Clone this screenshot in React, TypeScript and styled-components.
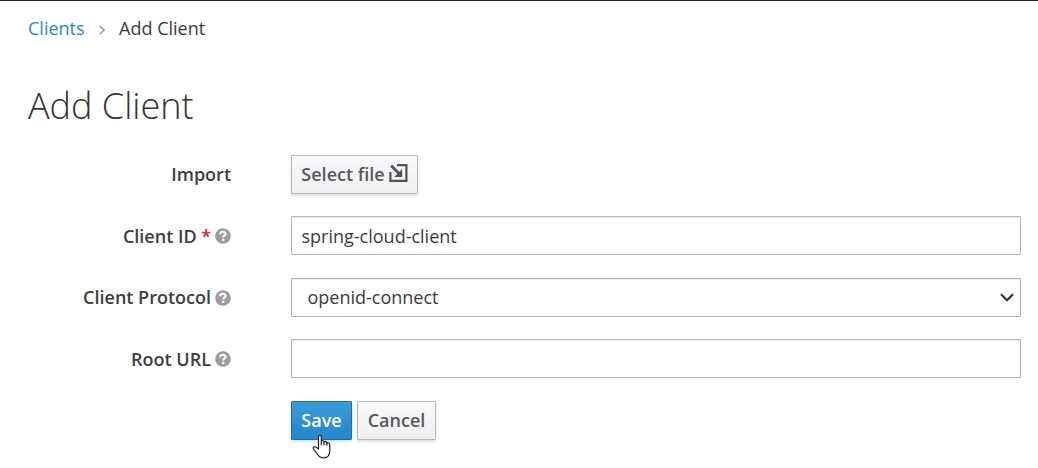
import React from 'react';
import styled, { createGlobalStyle } from 'styled-components';

const GlobalStyle = createGlobalStyle`
  *, *::before, *::after { box-sizing: border-box; }
  body {
    margin: 0;
    background: #fff;
    color: #3c3c40;
    font-family: 'Open Sans', sans-serif;
    font-size: 18px;
    line-height: 30px;
  }
`;

const Page = styled.main`
  height: 468px;
  overflow: hidden;
  border-top: 1px solid #231f20;
  padding: 12px 17px 0 28px;
`;

const Breadcrumb = styled.nav`
  display: flex;
  align-items: center;
  height: 30px;
`;

const Crumb = styled.span<{ $link?: boolean }>`
  color: ${(p) => (p.$link ? '#2b8ac6' : '#3c3c40')};
`;

const Separator = styled.svg`
  width: 6px;
  height: 10px;
  margin: 3px 14px 0 14.5px;
`;

const Title = styled.h1`
  margin: 37.8px 0 0;
  height: 74px;
  line-height: 50px;
  font-size: 36px;
  font-weight: 300;
  color: #333;
`;

const Form = styled.form`
  display: flex;
  flex-direction: column;
  gap: 22.5px;
`;

const Row = styled.div`
  display: grid;
  grid-template-columns: 203px 1fr;
  column-gap: 60px;
  align-items: center;
  height: 39px;
`;

const Label = styled.label`
  display: flex;
  align-items: center;
  justify-content: flex-end;
  font-weight: 600;
  color: #3e3e42;
  white-space: nowrap;
`;

const Required = styled.span`
  margin-left: 4.5px;
  color: #e0232b;
`;

const HelpIcon = styled.svg`
  width: 16px;
  height: 16px;
  margin: 1px 0 0 4px;
`;

const Field = styled.div<{ $inset?: number }>`
  display: flex;
  align-items: center;
  justify-content: space-between;
  height: 39px;
  padding: 0 6px 0 ${(p) => p.$inset ?? 9.5}px;
  border: 1px solid #b5b5b5;
  border-radius: 1px;
  box-shadow: inset 0 1px 1px rgba(3, 3, 3, 0.075);
`;

const Chevron = styled.svg`
  width: 14px;
  height: 9px;
`;

const Actions = styled.div`
  display: flex;
  gap: 5px;
`;

const Button = styled.button<{ $primary?: boolean; $width: number }>`
  position: relative;
  display: flex;
  align-items: center;
  justify-content: center;
  gap: 4px;
  width: ${(p) => p.$width}px;
  height: 39px;
  padding: 0;
  border: 1px solid ${(p) => (p.$primary ? '#1c6ea6' : '#b7b7b7')};
  border-radius: 1px;
  background: ${(p) =>
    p.$primary ? 'linear-gradient(#3a9bdb, #2487cc)' : 'linear-gradient(#fafafa, #efefef)'};
  box-shadow: 0 2px 3px rgba(3, 3, 3, 0.12);
  color: ${(p) => (p.$primary ? '#fff' : '#55595f')};
  font: 600 18px/30px 'Open Sans', sans-serif;
  white-space: nowrap;
`;

const ImportGlyph = styled.svg`
  width: 19px;
  height: 18px;
  margin-top: -2px;
`;

const Pointer = styled.svg`
  position: absolute;
  left: 20px;
  top: 32.5px;
  width: 19px;
  height: 25px;
`;

const Help = () => (
  <HelpIcon viewBox="0 0 16 16">
    <circle cx="8" cy="8" r="7.8" fill="#9d9d9d" />
    <path d="M5.2 6.2C5.2 3 10.6 3.1 10.6 5.9C10.6 7.7 8.2 7.6 8.2 9.5" fill="none" stroke="#fff" strokeWidth="2.1" />
    <rect x="7.1" y="10.7" width="2.2" height="2.2" fill="#fff" />
  </HelpIcon>
);

export default function App() {
  return (
    <Page>
      <GlobalStyle />
      <Breadcrumb>
        <Crumb $link>Clients</Crumb>
        <Separator viewBox="0 0 6 10" fill="none" stroke="#9c9c9c" strokeWidth="1.6">
          <path d="M.8 .8 5 5 .8 9.2" />
        </Separator>
        <Crumb>Add Client</Crumb>
      </Breadcrumb>
      <Title>Add Client</Title>
      <Form>
        <Row>
          <Label>Import</Label>
          <Button type="button" $width={127}>
            Select file
            <ImportGlyph viewBox="0 0 19 18" fill="none" stroke="#4d5258" strokeWidth="2.2">
              <path d="M8 1.2H17.4V16.8H1.4V8" />
              <path d="M2.2 1.8 11 10.6" strokeWidth="2.8" />
              <path d="M13.2 5V13H5.2Z" fill="#4d5258" stroke="none" />
            </ImportGlyph>
          </Button>
        </Row>
        <Row>
          <Label>
            Client ID<Required>*</Required>
            <Help />
          </Label>
          <Field>spring-cloud-client</Field>
        </Row>
        <Row>
          <Label>
            Client Protocol
            <Help />
          </Label>
          <Field $inset={15.5}>
            openid-connect
            <Chevron viewBox="0 0 14 9" fill="none" stroke="#333" strokeWidth="2.2">
              <path d="M1 1.2 7 7.2 13 1.2" />
            </Chevron>
          </Field>
        </Row>
        <Row>
          <Label>
            Root URL
            <Help />
          </Label>
          <Field />
        </Row>
        <Row>
          <span />
          <Actions>
            <Button type="button" $primary $width={61}>
              Save
              <Pointer viewBox="0 0 19 25" fill="#fff" stroke="#222" strokeWidth="1.2" strokeLinejoin="round">
                <path d="M6.5 15V3C6.5 .8 9.3 .8 9.3 3V7.5C9.3 5.9 12 6.2 12 8V8.6C12 6.8 14.8 7.2 14.8 9V9.6C15 8.2 17.8 8.4 17.8 10.5V16.5C17.8 21 15.7 23.8 11.7 23.8C7.8 23.8 6.5 22 4.5 18.8L1.5 15.2C.3 13.3 2.7 12 4 13.2Z" />
                <path d="M9.3 7.5V11.3M12 8.2V11.3M14.8 9.2V11.8" />
              </Pointer>
            </Button>
            <Button type="button" $width={79}>
              Cancel
            </Button>
          </Actions>
        </Row>
      </Form>
    </Page>
  );
}
